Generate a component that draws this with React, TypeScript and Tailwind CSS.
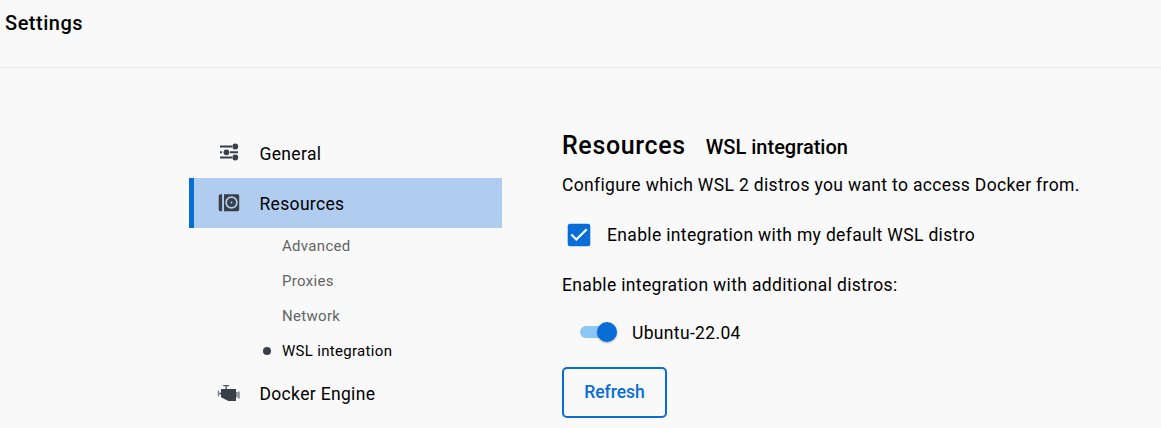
import type { ReactNode } from 'react';

const SlidersIcon = () => (
  <svg width="22" height="20" viewBox="0 0 22 20" fill="#393f49">
    <path d="M2 2.500h12v2H2zM2 8.300h2v2H2zM12 8.300h8v2h-8zM2 13.500h12v2H2z" />
    <circle cx="17.300" cy="3.500" r="2.900" />
    <circle cx="8.400" cy="9.300" r="2.900" />
    <circle cx="17.300" cy="14.500" r="2.900" />
  </svg>
);

const DiskIcon = () => (
  <svg width="22" height="20" viewBox="0 0 22 20">
    <path fill="#393f49" d="M2.500 1.200H4.100v17H2.500Q.7 18.200.7 16.400V3Q.7 1.200 2.500 1.200zM6 1.200h13.600q1.600 0 1.600 1.600v13.800q0 1.600-1.600 1.600H6z" />
    <circle cx="13.500" cy="9.500" r="5.400" fill="none" stroke="#b0cdf0" strokeWidth="1.700" />
    <circle cx="13.500" cy="9.500" r="1" fill="#b0cdf0" />
  </svg>
);

const EngineIcon = () => (
  <svg className="-ml-px" width="24" height="20" viewBox="0 0 24 20" fill="#393f49">
    <path d="M4.500 6H19v12h-7.500L4 14.200V11.200H2.300V9.700H4V6.500z" />
    <path d="M6.200 2h6v1.200H9.900V6H8.500V3.200H6.200z" opacity=".85" />
    <path d="M.7 7.500H2.200v6H.7z" opacity=".6" />
    <path d="M19 9h1.500v5.500H19zM20.800 8.500h1.900v7h-1.900z" opacity=".6" />
  </svg>
);

function NavItem({ icon, label, active = false }: { icon: ReactNode; label: string; active?: boolean }) {
  return (
    <a
      className={
        active
          ? 'flex h-[50px] items-center border-l-[5px] border-[#086dd7] bg-[#b0cdf0]'
          : 'flex h-[50px] items-center border-l-[5px] border-transparent'
      }
    >
      <span className="ml-6 flex w-[41.500px] shrink-0">{icon}</span>
      <span className="pt-0.5 text-[17.500px] leading-6 tracking-[0.33px]">{label}</span>
    </a>
  );
}

function SubItem({ label, active = false }: { label: string; active?: boolean }) {
  return (
    <a className="flex h-[35px] items-center pl-[74px]">
      <span className={active ? 'mr-[11px] size-2 rounded-full bg-[#393f49]' : 'mr-[11px] size-2'} />
      <span
        className={
          active
            ? 'text-[15px] leading-5 tracking-[0.31px] text-black'
            : 'text-[15px] leading-5 tracking-[0.31px] text-[#646464]'
        }
      >
        {label}
      </span>
    </a>
  );
}

export default function App() {
  return (
    <div className="flex h-[428px] flex-col overflow-hidden bg-[#f9f9f9] font-[Roboto,sans-serif] text-black">
      <header className="h-[68px] shrink-0 border-b border-[#e9e9e9] pl-[5px] pt-[9px]">
        <h1 className="text-[20px] font-medium leading-7 tracking-[0.52px]">Settings</h1>
      </header>
      <div className="flex pl-[189px]">
        <nav className="w-[313px] pt-[60px]">
          <NavItem icon={<SlidersIcon />} label="General" />
          <NavItem icon={<DiskIcon />} label="Resources" active />
          <SubItem label="Advanced" />
          <SubItem label="Proxies" />
          <SubItem label="Network" />
          <SubItem label="WSL integration" active />
          <NavItem icon={<EngineIcon />} label="Docker Engine" />
        </nav>
        <main className="ml-[60px] pt-[62px]">
          <div className="flex h-8 items-baseline whitespace-nowrap">
            <h2 className="text-[25px] font-medium leading-8 tracking-[0.64px]">Resources</h2>
            <h3 className="ml-5 text-[20px] font-medium leading-8">WSL integration</h3>
          </div>
          <p className="mt-[11px] whitespace-nowrap text-[17.500px] leading-6 tracking-[0.34px]">
            Configure which WSL 2 distros you want to access Docker from.
          </p>
          <label className="mt-[26px] flex h-6 items-center pl-[5px]">
            <svg width="24" height="24" viewBox="0 0 24 24">
              <rect x=".7" y=".7" width="22.600" height="22.600" rx="2.500" fill="#086dd7" />
              <path d="m4.300 11.500 5 5L19.800 6.300" fill="none" stroke="#fff" strokeWidth="2.300" />
            </svg>
            <span className="ml-4 whitespace-nowrap text-[17.500px] leading-6 tracking-[0.34px]">
              Enable integration with my default WSL distro
            </span>
          </label>
          <p className="mt-[26px] whitespace-nowrap text-[17.500px] leading-6 tracking-[0.34px]">
            Enable integration with additional distros:
          </p>
          <label className="mt-[23px] flex h-6 items-center pl-[18px]">
            <span className="flex h-3 w-[37px] items-center justify-end rounded-full bg-[#8bc7f5]">
              <span className="size-5 shrink-0 rounded-full bg-[#086dd7] shadow-[0_1px_2px_rgba(0,0,0,0.3)]" />
            </span>
            <span className="ml-[15px] pt-0.5 text-[17.500px] leading-6 tracking-[0.34px]">Ubuntu-22.04</span>
          </label>
          <button className="mt-[23px] flex h-[51px] w-[105px] items-center justify-center rounded-[5px] border-2 border-[#086dd7] text-[17.500px] font-medium text-[#086dd7]">
            Refresh
          </button>
        </main>
      </div>
    </div>
  );
}
